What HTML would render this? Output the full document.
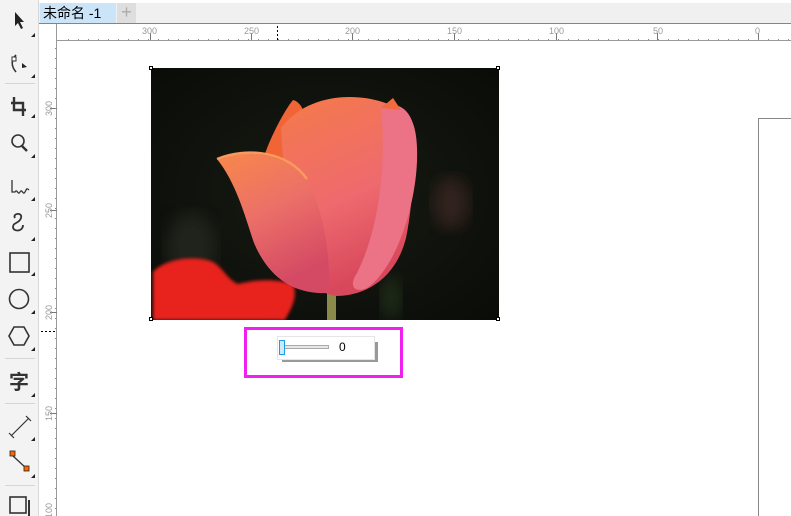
<!DOCTYPE html>
<html><head><meta charset="utf-8"><style>
*{margin:0;padding:0;box-sizing:border-box}
body{width:791px;height:516px;overflow:hidden;background:#fff;position:relative;font-family:"Liberation Sans","Noto Sans CJK SC",sans-serif}
.a{position:absolute}
.tb{left:0;top:0;width:39px;height:516px;background:#f3f3f3;border-right:1px solid #d8d8d8}
.sep{position:absolute;left:5px;width:30px;height:1px;background:#d6d6d6}
.tri{position:absolute;width:0;height:0;border-left:4px solid transparent;border-bottom:4px solid #222}
</style></head><body>
<div class="a" style="left:39px;top:0;width:752px;height:23px;background:#f0f0f0"></div>
<div class="a" style="left:39px;top:0;width:752px;height:3px;background:#fff"></div>
<div class="a" style="left:40px;top:3px;width:76px;height:20px;background:#cce4f7;font-size:14px;line-height:20px;padding-left:3px;color:#000">未命名 -1</div>
<div class="a" style="left:117px;top:3px;width:19px;height:20px;background:#dedede;color:#aaa;font-size:18px;line-height:19px;text-align:center">+</div>
<div class="a" style="left:39px;top:23px;width:752px;height:1px;background:#2a9df4"></div>
<div class="a" style="left:39px;top:24px;width:752px;height:17px;background:#fff;border-bottom:1px solid #999"></div>
<div class="a" style="left:39px;top:24px;width:18px;height:492px;background:#fff;border-right:1px solid #999"></div>
<svg class="a" style="left:0;top:0" width="791" height="516">
<g stroke="#777" stroke-width="1">
<path d="M150.5 33v7M251.5 33v7M352.5 33v7M454.5 33v7M556.5 33v7M657.5 33v7M758.5 33v7"/>
<path d="M50 108.5h7M50 210.5h7M50 312.5h7M50 413.5h7"/>
</g>
<g stroke="#888" stroke-dasharray="1 9">
<path d="M68 39.5H791" /><path d="M55.5 48V516"/>
</g>
<path d="M277.5 26v14" stroke="#000" stroke-dasharray="2 2"/>
<path d="M41 331.5h15" stroke="#000" stroke-dasharray="2 2"/>
<g font-family="Liberation Sans" font-size="9" fill="#999">
<text x="142" y="34">300</text><text x="244" y="34">250</text><text x="345" y="34">200</text><text x="447" y="34">150</text><text x="549" y="34">100</text><text x="653" y="34">50</text><text x="755" y="34">0</text>
<text transform="translate(52,116) rotate(-90)">300</text>
<text transform="translate(52,218) rotate(-90)">250</text>
<text transform="translate(52,320) rotate(-90)">200</text>
<text transform="translate(52,421) rotate(-90)">150</text>
<text transform="translate(52,518) rotate(-90)">100</text>
</g>
<path d="M758.5 516V118.5H791" stroke="#888" fill="none"/>
</svg>
<div class="a tb"></div>
<svg class="a" style="left:0;top:0" width="39" height="516">
<g fill="none" stroke="#333" stroke-width="1.6">
<path d="M15 12v14l3-3 3 6 2-1-3-6h4z" fill="#222" stroke="none"/>
<path d="M16 55c-5 5-5 11 0 17"/><rect x="12" y="57" width="4" height="4" fill="#fff" stroke-width="1"/>
<path d="M22 63l5 4-5 1z" fill="#222" stroke="none"/>
<path d="M14 97v13h12M11 103h12v13" stroke-width="2.4"/>
<circle cx="18" cy="141" r="6"/><path d="M22 146l5 5" stroke-width="2.4"/>
<path d="M12 180v12h3c2-4 3 4 5 0s3 4 5 0 2-4 4-2" stroke-width="1.3"/>
<path d="M15 218c-3-5 8-6 6 0s-8 4-8 9 10 5 10-2" stroke-width="1.8"/>
<rect x="10" y="253" width="19" height="19"/>
<circle cx="19" cy="299" r="9.5"/>
<path d="M14 327h10l5 9-5 9H14l-5-9z"/>
<path d="M11 436l18-18M9 433l5 5M26 416l5 5" stroke-width="1.2"/>
<path d="M13 456l13 12" stroke-width="1.3"/>
<rect x="10" y="497" width="16" height="16"/><path d="M29 500v16" stroke-width="2"/>
</g>
<rect x="10" y="451" width="5" height="5" fill="#f60" stroke="#222" stroke-width=".8"/>
<rect x="24" y="466" width="5" height="5" fill="#f60" stroke="#222" stroke-width=".8"/>
<text x="9" y="389" font-family="Noto Sans CJK SC" font-size="20" font-weight="bold" fill="#333">字</text>
</svg>
<div class="tri" style="left:31px;top:33px"></div><div class="tri" style="left:31px;top:74px"></div>
<div class="tri" style="left:31px;top:114px"></div><div class="tri" style="left:31px;top:154px"></div>
<div class="tri" style="left:31px;top:197px"></div><div class="tri" style="left:31px;top:237px"></div>
<div class="tri" style="left:31px;top:272px"></div><div class="tri" style="left:31px;top:310px"></div>
<div class="tri" style="left:31px;top:347px"></div><div class="tri" style="left:31px;top:393px"></div>
<div class="tri" style="left:31px;top:437px"></div><div class="tri" style="left:31px;top:474px"></div>
<div class="sep" style="top:83px"></div><div class="sep" style="top:358px"></div><div class="sep" style="top:403px"></div><div class="sep" style="top:485px"></div>
<svg class="a" style="left:151px;top:68px" width="348" height="252" viewBox="0 0 348 252">
<defs>
<radialGradient id="bg" cx="0.5" cy="0.5" r="0.7"><stop offset="0" stop-color="#181a13"/><stop offset="1" stop-color="#0a0c08"/></radialGradient>
<linearGradient id="p" x1="0" y1="0" x2="0.3" y2="1"><stop offset="0" stop-color="#f57a4a"/><stop offset="0.6" stop-color="#ee6a6e"/><stop offset="1" stop-color="#d8485c"/></linearGradient>
<linearGradient id="q" x1="0" y1="0" x2="0.4" y2="1"><stop offset="0" stop-color="#f7884a"/><stop offset="0.5" stop-color="#ec7068"/><stop offset="1" stop-color="#d44a64"/></linearGradient>
<filter id="bl"><feGaussianBlur stdDeviation="8"/></filter>
<filter id="bl2"><feGaussianBlur stdDeviation="1.5"/></filter>
</defs>
<rect width="348" height="252" fill="url(#bg)"/>
<ellipse cx="40" cy="180" rx="25" ry="35" fill="#33362c" filter="url(#bl)" opacity=".5"/>
<ellipse cx="300" cy="135" rx="18" ry="26" fill="#3a2620" filter="url(#bl)" opacity=".8"/>
<ellipse cx="240" cy="230" rx="10" ry="22" fill="#2c4024" filter="url(#bl)" opacity=".6"/>
<rect x="176" y="222" width="9" height="30" fill="#8a8a4a"/>
<path d="M2 204c10-12 40-18 60-10 10 6 15 18 25 22 15-4 35-6 55 0 6 14-4 28-8 36H2z" fill="#e8201c" filter="url(#bl2)"/>
<path d="M110 100c5-25 25-60 32-68 15 4 12 30 30 60 8 30 0 90 8 135-30-10-50-45-70-127z" fill="#f06436"/>
<path d="M130 60c30-40 90-35 115-20 20 20 20 80 10 130-10 40-40 58-70 58-40-5-50-80-55-168z" fill="url(#p)"/>
<path d="M230 40c20-10 35 5 36 40 2 50-20 120-50 140-10 5-20 0-10-15 20-40 30-100 24-165z" fill="#ec7286"/>
<path d="M66 91c25-10 65-8 90 20 16 30 24 76 22 114-35 2-60-15-75-50-10-30-18-60-37-84z" fill="url(#q)"/>
<path d="M66 91c30-12 70-8 90 20" fill="none" stroke="#f89a60" stroke-width="2.5"/>
<path d="M230 40l12-10 8 12" fill="#f26a40"/>
</svg>
<div class="a" style="left:149px;top:66px;width:4px;height:4px;border:1px solid #000;background:#fff"></div>
<div class="a" style="left:496px;top:66px;width:4px;height:4px;border:1px solid #000;background:#fff"></div>
<div class="a" style="left:149px;top:317px;width:4px;height:4px;border:1px solid #000;background:#fff"></div>
<div class="a" style="left:496px;top:317px;width:4px;height:4px;border:1px solid #000;background:#fff"></div>
<div class="a" style="left:244px;top:327px;width:159px;height:51px;border:3px solid #f020f0"></div>
<div class="a" style="left:282px;top:342px;width:96px;height:20px;background:#999"></div>
<div class="a" style="left:277px;top:336px;width:98px;height:24px;background:#fff;border:1px solid #e6e6e6"></div>
<div class="a" style="left:283px;top:345px;width:46px;height:4px;border:1px solid #aaa;background:#e6e6e6"></div>
<div class="a" style="left:279px;top:340px;width:6px;height:15px;border:1px solid #1e9be8;background:#cde8fb"></div>
<div class="a" style="left:339px;top:337px;width:35px;height:22px;background:#fff;font-size:12px;line-height:20px;padding-left:0;color:#000">0</div>
</body></html>
